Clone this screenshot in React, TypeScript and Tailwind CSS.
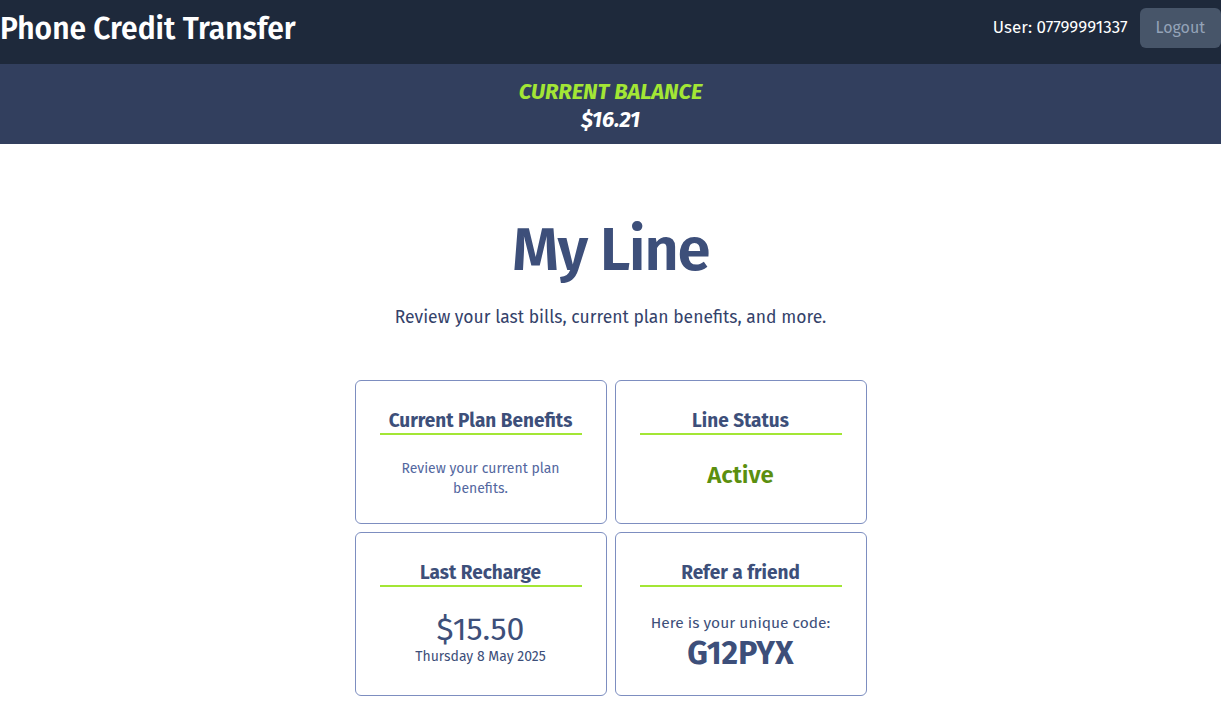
import React from "react";

const font = { fontFamily: '"Fira Sans", "Open Sans", "Noto Sans", sans-serif' };

function Card({ title, children }: { title: string; children: React.ReactNode }) {
  return (
    <div className="rounded-md border border-[#7d8ec0] bg-white p-6 text-center">
      <h3 className="border-b-2 border-[#a3e635] pt-[4px] text-[19px] leading-[24px] font-bold text-[#3d4f7a]">{title}</h3>
      <div className="mt-6">{children}</div>
    </div>
  );
}

export default function App() {
  return (
    <div style={font} className="min-h-[708px] bg-white">
      <header className="flex h-16 items-start justify-between bg-[#1e293b] pt-2">
        <h1 className="mt-[3px] text-[30px] leading-9 font-semibold text-white">Phone Credit Transfer</h1>
        <div className="flex items-center gap-3">
          <span className="text-[17px] text-white">User: 07799991337</span>
          <button className="rounded-md bg-[#475569] px-4 py-2 text-base text-[#94a3b8]">Logout</button>
        </div>
      </header>
      <div className="bg-[#323f5e] pt-[14px] pb-[10px] text-center text-[22px] leading-7 font-bold italic">
        <div className="text-[#a3e635]">CURRENT BALANCE</div>
        <div className="text-white">$16.21</div>
      </div>
      <main className="flex flex-col items-center pt-[76px]">
        <h2 className="text-6xl font-semibold leading-none tracking-tight text-[#3d4f7a]">My Line</h2>
        <p className="mt-6 text-[17.5px] leading-7 text-[#34426a]">Review your last bills, current plan benefits, and more.</p>
        <div className="mt-12 grid w-[512px] grid-cols-2 gap-2">
          <Card title="Current Plan Benefits">
            <p className="px-4 text-sm text-[#5367a0]">Review your current plan benefits.</p>
          </Card>
          <Card title="Line Status">
            <p className="text-2xl font-semibold text-[#5b8f0f]">Active</p>
          </Card>
          <Card title="Last Recharge">
            <p className="text-[32px] leading-9 text-[#3d4f7a]">$15.50</p>
            <p className="text-sm text-[#3d4f7a]">Thursday 8 May 2025</p>
          </Card>
          <Card title="Refer a friend">
            <p className="text-[15.5px] leading-6 text-[#3d4f7a]">Here is your unique code:</p>
            <p className="text-[32px] leading-9 font-bold text-[#3d4f7a]">G12PYX</p>
          </Card>
        </div>
      </main>
    </div>
  );
}
